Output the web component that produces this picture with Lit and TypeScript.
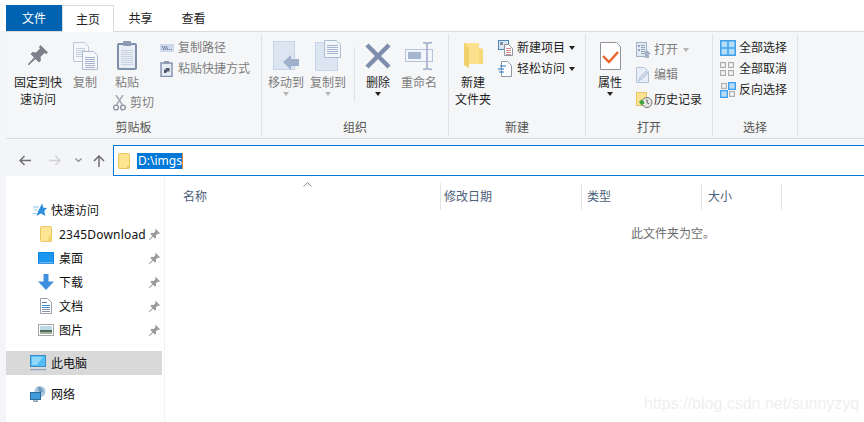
import { LitElement, html, css, svg } from "lit";
import { customElement } from "lit/decorators.js";

const pinPath = "M12.5 0 L20 7.5 L18 9 L16.5 8 L12.5 12 L13 15.5 L11 17.5 L7.5 14 L1 20 L0 20 L0 19 L6 12.5 L2.5 9 L4.5 7 L8 7.5 L12 3.5 L11 2Z";
const ic = (w: number, h: number, body: unknown) =>
  html`<svg class="ic" width=${w} height=${h} viewBox="0 0 ${w} ${h}">${body}</svg>`;

const lines = (x: number, y: number, w: number, n: number, step: number, c: string) =>
  Array.from({ length: n }, (_, i) => svg`<rect x=${x} y=${y + i * step} width=${w} height="1" fill=${c}/>`);

const doc = (x: number, y: number, w: number, h: number, fill = "#f4f6fa", stroke = "#bcc8da") =>
  svg`<path d="M${x + .5} ${y + .5}H${x + w - 4.5}L${x + w - .5} ${y + 4.5}V${y + h - .5}H${x + .5}Z" fill=${fill} stroke=${stroke}/>`;

const icons = {
  pin: ic(20, 21, svg`<path d=${pinPath} fill="#7c8087"/>`),
  copy: ic(25, 28, svg`${doc(0, 0, 16, 20)}${lines(3, 6, 9, 5, 2, "#c5cfdf")}${doc(9, 9, 16, 19, "#f6f8fb", "#aebcd2")}${lines(12, 15, 10, 6, 2, "#a6b5cd")}`),
  paste: ic(20, 29, svg`<rect x="1" y="3" width="18" height="25" rx="1" fill="#e9eef6" stroke="#7f8ea9" stroke-width="2"/><rect x="6" y="0" width="8" height="5" rx="1" fill="#8d9ab0"/>${lines(4, 9, 12, 8, 2, "#c7d2e3")}`),
  scissors: ic(13, 16, svg`<path d="M3 0L9.5 10M10 0L3.5 10" stroke="#a6aeba" stroke-width="1.6" fill="none"/><circle cx="3" cy="12.5" r="2.4" fill="none" stroke="#8f97a5" stroke-width="1.4"/><circle cx="10" cy="12.5" r="2.4" fill="none" stroke="#8f97a5" stroke-width="1.4"/>`),
  copyPath: ic(14, 8, svg`<rect width="14" height="8" fill="#cdd8ea"/><path d="M2 2L4 6M4 2L6 6M6 2L8 6" stroke="#6f7f99" fill="none"/><rect x="9" y="5" width="1" height="1" fill="#6f7f99"/><rect x="11" y="5" width="1" height="1" fill="#6f7f99"/>`),
  pasteLink: ic(13, 16, svg`<rect x="1" y="2" width="11" height="13.5" fill="#e6ebf4" stroke="#7f8ea9" stroke-width="1.4"/><rect x="4" y="0" width="5" height="3" fill="#8d9ab0"/><path d="M4 12V8.5H6.5L5.5 7H9.5V11L8 10L6 12Z" fill="#4a5568"/>`),
  move: ic(27, 30, svg`<rect x="0.5" y="0.5" width="21" height="28" fill="#dce6f3" stroke="#c8d5e8"/><path d="M10 21L18 14V18H26V25H18V29Z" fill="#9fb1cd"/>`),
  copyTo: ic(27, 31, svg`<rect x="0.5" y="2.5" width="22" height="28" fill="#dce6f3" stroke="#c8d5e8"/>${doc(9, 0, 17, 18, "#f2f5fa", "#aebcd2")}${lines(12, 5, 11, 5, 2, "#a6b5cd")}`),
  del: ic(26, 26, svg`<path d="M2 2L24 24M24 2L2 24" stroke="#7e8dab" stroke-width="4.4" fill="none"/>`),
  rename: ic(28, 28, svg`<rect x="0.5" y="7.5" width="27" height="12" fill="#f2f5f9" stroke="#b5c4dc"/><rect x="3" y="10" width="13" height="7" fill="#a7b6d0"/><path d="M18 0.8H20.5L22 2L23.5 0.8H27M22 2V26M18 27.2H20.5L22 26L23.5 27.2H27" stroke="#9fadc7" stroke-width="1.6" fill="none"/>`),
  folderBig: ic(19, 27, svg`<path d="M0 1H15V6L19 7V22H5Z" fill="#fde08c"/><path d="M0 1L5 6V26L0 23Z" fill="#f0cf6c"/><path d="M15 6L19 7V22H15Z" fill="#f7d878"/>`),
  newItem: ic(15, 16, svg`<rect x="0.5" y="0.5" width="10" height="9" fill="#dce6f3" stroke="#4d86b8"/><rect x="2" y="2" width="3" height="3" fill="#7f93ae"/>${doc(6, 4, 9, 12, "#fff", "#8d97a6")}${lines(8, 8, 5, 4, 2, "#d08a8a")}`),
  easy: ic(14, 16, svg`${doc(3, 0, 11, 16, "#fff", "#8d97a6")}<path d="M2 5H8M0 8H6M1 11H6" stroke="#1e78c8" fill="none"/>`),
  props: ic(21, 28, svg`${doc(0, 0, 21, 28, "#fff", "#8f949b")}<path d="M3 14L9 20L18 10" stroke="#e8622c" stroke-width="2.4" fill="none"/>`),
  open: ic(15, 16, svg`<rect x="0.5" y="0.5" width="10" height="14" fill="#e3e9f3" stroke="#a4b2c8"/>${lines(5, 3, 4, 5, 2, "#93a3bb")}<rect x="2" y="3" width="2" height="2" fill="#93a3bb"/><rect x="2" y="7" width="2" height="2" fill="#93a3bb"/><path d="M11 8L15 12H13V16H9V12H7Z" fill="#a4b2c8"/>`),
  edit: ic(13, 16, svg`${doc(0, 0, 13, 16, "#e8eef8", "#b4c2d8")}<path d="M2.5 14L4 10.5L10 4L12 6L5.5 12.5Z" fill="#cdd8e8" stroke="#a9b8ce" stroke-width=".7"/>`),
  history: ic(17, 16, svg`<rect x="0.5" y="0.5" width="10" height="13" fill="#fbe391" stroke="#e5c565"/><circle cx="11" cy="10.5" r="5" fill="#e4e4e4" stroke="#777"/><path d="M11 7.5V10.5L13 12" stroke="#555" fill="none"/><path d="M3 10L6 7V9H8V12H6V14Z" fill="#3da33a"/>`),
  selAll: ic(16, 16, svg`<rect x="0.75" y="0.75" width="14.5" height="14.5" fill="#b6dcfb" stroke="#3d9fe8" stroke-width="1.5"/><path d="M8 0V16M0 8H16" stroke="#3d9fe8" stroke-width="1.5"/>`),
  selNone: ic(14, 14, svg`<g fill="none" stroke="#aeaeae" stroke-width="1.2"><rect x="0.6" y="0.6" width="4.8" height="4.8"/><rect x="8.6" y="0.6" width="4.8" height="4.8"/><rect x="0.6" y="8.6" width="4.8" height="4.8"/><rect x="8.6" y="8.6" width="4.8" height="4.8"/></g>`),
  invert: ic(16, 16, svg`<g fill="none" stroke="#aeaeae" stroke-width="1.2"><rect x="1.6" y="1.6" width="4.8" height="4.8"/><rect x="9.6" y="9.6" width="4.8" height="4.8"/></g><g fill="#b6dcfb" stroke="#3d9fe8" stroke-width="1.3"><rect x="8.65" y="0.65" width="6.7" height="6.7"/><rect x="0.65" y="8.65" width="6.7" height="6.7"/></g>`),
  back: ic(12, 11, svg`<path d="M5.5 1L1 5.5L5.5 10M1 5.5H12" stroke="#6f6f6f" stroke-width="1.5" fill="none"/>`),
  forward: ic(12, 11, svg`<path d="M6.5 1L11 5.5L6.5 10M0 5.5H11" stroke="#d2d2d2" stroke-width="1.5" fill="none"/>`),
  chevron: ic(7, 5, svg`<path d="M0.5 0.5L3.5 3.5L6.5 0.5" stroke="#8a8a8a" stroke-width="1.2" fill="none"/>`),
  up: ic(12, 12, svg`<path d="M1 6L6 1L11 6M6 1V12" stroke="#6f6f6f" stroke-width="1.5" fill="none"/>`),
  addrFolder: ic(12, 16, svg`<rect x="0.5" y="0.5" width="11" height="15" rx="1" fill="#fde48f" stroke="#eac55e"/><rect x="9" y="13" width="2.5" height="2.5" fill="#eac55e"/>`),
  star: ic(14, 14, svg`<path d="M9 0.5L10.5 4.8L14 5L11.3 8L12.4 13L8 10.5L3.5 13L5 8.5L7 4.5Z" fill="#2f8fdc"/><path d="M0 4H6M1 7H4.5M0 10.5H3.5" stroke="#8cc4ee" fill="none"/>`),
  sFolder: ic(12, 16, svg`<rect x="0.5" y="0.5" width="11" height="15" rx="1" fill="#fde594" stroke="#e9c75f"/><rect x="9" y="10" width="2.5" height="5" fill="#f6d978" stroke="#e9c75f" stroke-width=".6"/>`),
  desktop: ic(16, 12, svg`<rect x="0" y="0" width="16" height="12" fill="#0d82de"/><rect x="1" y="1" width="14" height="9" fill="#1b97f0"/><rect x="1" y="10.5" width="14" height="0.7" fill="#d4eafa"/>`),
  download: ic(16, 16, svg`<path d="M5.5 0H10.5V7.5H16L8 16L0 7.5H5.5Z" fill="#3e8ede"/>`),
  sDoc: ic(12, 16, svg`${doc(0, 0, 12, 16, "#fff", "#9aa2ae")}${lines(2, 4, 5, 1, 2, "#6a7f9a")}${lines(2, 7, 8, 2, 2, "#3d8ed0")}${lines(2, 11, 8, 2, 2, "#8a95a3")}`),
  pic: ic(16, 12, svg`<rect x="0.5" y="0.5" width="15" height="11" fill="#fff" stroke="#a5a5a5"/><rect x="2" y="2" width="12" height="4" fill="#bcd9e8"/><rect x="2" y="6" width="12" height="2" fill="#4f6b57"/><rect x="2" y="8" width="12" height="2" fill="#9fb1a2"/>`),
  pc: ic(16, 16, svg`<rect x="0.5" y="0.5" width="15" height="11" fill="#52bdf7" stroke="#3b8fc4"/><path d="M2 2H13L7 10H2Z" fill="#8fd8fb"/><rect x="0" y="14" width="16" height="1.2" fill="#8ea7c0"/>`),
  net: ic(16, 16, svg`<circle cx="10" cy="5.5" r="5.5" fill="#a9c7de"/><path d="M8 1C11 1 13 3 13 6C11 7 8 6 8 1Z" fill="#6f98b8"/><rect x="0.5" y="6.5" width="10" height="7" fill="#3f9ad9" stroke="#2a6d9d"/><rect x="3" y="14.5" width="5" height="1.2" fill="#5a7d96"/>`),
};

const smallPin = html`<svg class="spin" width="11" height="11" viewBox="0 0 20 20"><path d=${pinPath} fill="#9b9b9b"/></svg>`;

@customElement("app-root")
export class AppRoot extends LitElement {
  static styles = css`
    :host { display: block; width: 864px; height: 422px; overflow: hidden; background: #fff; position: relative;
      font: 12px/17px "Noto Sans", "Noto Sans CJK SC", sans-serif; color: #1f1f1f; }
    * { box-sizing: border-box; }
    .ic, .spin { display: block; flex: none; }
    .tabs { display: flex; height: 31px; padding: 5px 0 0 6px; }
    .tab { width: 53px; height: 26px; display: flex; align-items: center; justify-content: center; color: #222; }
    .tab.file { width: 56px; background: #0063b1; color: #fff; }
    .tab.home { width: 52px; height: 27px; background: #fff; border: 1px solid #dadbdc; border-bottom: 0; position: relative; z-index: 1; }
    .body { background: #f4f5f8; padding-left: 6px; height: 391px; }
    .ribbon { display: flex; height: 108px; background: #f5f6f7; border-top: 1px solid #dadbdc; border-bottom: 1px solid #dadbdc; padding: 2px 0; }
    .group { display: flex; flex-direction: column; justify-content: space-between; align-items: stretch; height: 102px; padding: 3px 0 0; border-right: 1px solid #dfe1e4; }
    .tools { display: flex; align-items: flex-start; }
    .glabel { text-align: center; color: #555; height: 17px; }
    .big { display: flex; flex-direction: column; align-items: center; text-align: center; flex: none; }
    .w36 { width: 36px; } .w40 { width: 40px; } .w42 { width: 42px; } .w46 { width: 46px; } .w52 { width: 52px; }
    .iconbox { height: 37px; display: flex; align-items: center; justify-content: center; }
    .big .label { white-space: nowrap; }
    .off { color: #7d7d7d; }
    .caret { width: 0; height: 0; border: 3px solid transparent; border-top: 4px solid #222; border-bottom: 0; margin-top: 1px; }
    .caret.off { border-top-color: #b5b5b5; }
    .col { display: flex; flex-direction: column; flex: none; }
    .row { display: flex; align-items: center; height: 21px; white-space: nowrap; }
    .row.tall { height: 25px; }
    .icslot { width: 18px; display: flex; justify-content: flex-start; flex: none; }
    .wide .icslot { width: 19px; }
    .rcaret { width: 0; height: 0; border: 3px solid transparent; border-top: 4px solid #222; border-bottom: 0; margin-left: 4px; }
    .rcaret.off { border-top-color: #b5b5b5; margin-left: 5px; }
    .cut { display: flex; align-items: center; gap: 4px; height: 21px; margin-top: 1px; margin-left: 7px; white-space: nowrap; }
    .vsep { width: 1px; height: 55px; background: #dfe1e4; margin: 10px 0 0 0; flex: none; }
    .g1 { width: 256px; } .g2 { width: 187px; } .g3 { width: 137px; } .g4 { width: 127px; } .g5 { width: 85px; }
    .sp3 { width: 3px; flex: none; } .sp4 { width: 4px; flex: none; } .sp5 { width: 5px; flex: none; }
    .sp6 { width: 6px; flex: none; } .sp7 { width: 7px; flex: none; }
    .c54 { width: 54px; }
    .nav { display: flex; align-items: center; height: 37px; padding: 6px 0 0 0; }
    .nbtn { display: flex; justify-content: center; flex: none; }
    .nb-back { margin-left: 13px; width: 12px; }
    .nb-fwd { margin-left: 18px; width: 12px; }
    .nb-chev { margin-left: 14px; width: 7px; }
    .nb-up { margin-left: 11px; width: 12px; }
    .addr { flex: 1; height: 31px; border: 1px solid #0078d7; border-right: 0; margin-left: 8px; display: flex; align-items: center; padding-left: 4px; background: #fff; }
    .sel { margin-left: 7px; background: #0078d7; color: #fff; height: 16px; line-height: 16px; width: 46px; padding-left: 1px; border-right: 1px solid #e8822c; white-space: nowrap; overflow: hidden; }
    .main { display: flex; height: 246px; }
    .side { width: 159px; background: #fff; border-right: 1px solid #f2f2f2; padding-top: 22px; flex: none; }
    .item { display: flex; align-items: center; height: 24px; width: 156px; white-space: nowrap; color: #111; }
    .item.top { padding-left: 26px; }
    .item.sub { padding-left: 32px; }
    .item .slot { width: 16px; display: flex; justify-content: center; flex: none; }
    .item.top .lbl { margin-left: 3px; }
    .item.sub .lbl { margin-left: 5px; }
    .item .spin { margin-left: auto; margin-right: 2px; }
    .item.sub .lbl.long { letter-spacing: .2px; }
    .item.pc { margin-top: 9px; background: #d9d9d9; padding-left: 24px; }
    .item.net { margin-top: 7px; padding-left: 24px; }
    .item.pc .slot, .item.net .slot { width: 18px; justify-content: flex-start; }
    .content { flex: 1; background: #fff; position: relative; }
    .head { display: flex; height: 27px; margin-top: 7px; color: #4c607a; }
    .hc { border-right: 1px solid #e5e5e5; display: flex; align-items: center; padding-left: 4px; flex: none; }
    .hc.name { width: 276px; padding-left: 18px; }
    .hc.date { width: 141px; padding-left: 3px; }
    .hc.type { width: 120px; padding-left: 5px; }
    .hc.size { width: 80px; padding-left: 6px; }
    .sort { position: absolute; left: 138px; top: 6px; }
    .empty { padding: 15px 0 0 466px; color: #6d6d6d; }
    .mark { position: absolute; left: 644px; top: 394px; font: 16px/20px "Liberation Sans", sans-serif; color: #efefef; white-space: nowrap; }
  `;

  private big(icon: unknown, label: unknown, cls: string, off = false, caret = "") {
    return html`<div class="big ${cls} ${off ? "off" : ""}">
      <div class="iconbox">${icon}</div>
      <div class="label">${label}</div>
      ${caret === "on" ? html`<div class="caret"></div>` : caret === "off" ? html`<div class="caret off"></div>` : ""}
    </div>`;
  }

  private small(icon: unknown, label: string, cls = "", after: unknown = "") {
    return html`<div class="row ${cls}"><div class="icslot">${icon}</div><span>${label}</span>${after}</div>`;
  }

  render() {
    return html`
      <div class="tabs">
        <div class="tab file">文件</div>
        <div class="tab home">主页</div>
        <div class="tab">共享</div>
        <div class="tab">查看</div>
      </div>
      <div class="body">
        <div class="ribbon">
          <section class="group g1">
            <div class="tools">
              <div class="sp6"></div>
              ${this.big(icons.pin, html`固定到快<br />速访问`, "w52")}
              ${this.big(icons.copy, "复制", "w42", true)}
              <div class="col c54">
                ${this.big(icons.paste, "粘贴", "w42", true)}
                <div class="cut off">${icons.scissors}<span>剪切</span></div>
              </div>
              <div class="col off">
                ${this.small(icons.copyPath, "复制路径")}
                ${this.small(icons.pasteLink, "粘贴快捷方式")}
              </div>
            </div>
            <div class="glabel">剪贴板</div>
          </section>
          <section class="group g2">
            <div class="tools">
              <div class="sp3"></div>
              ${this.big(icons.move, "移动到", "w42", true, "off")}
              ${this.big(icons.copyTo, "复制到", "w42", true, "off")}
              <div class="sp5"></div>
              <div class="vsep"></div>
              ${this.big(icons.del, html`删除`, "w46", false, "on")}
              ${this.big(icons.rename, "重命名", "w36", true)}
            </div>
            <div class="glabel">组织</div>
          </section>
          <section class="group g3">
            <div class="tools">
              <div class="sp4"></div>
              ${this.big(icons.folderBig, html`新建<br />文件夹`, "w40")}
              <div class="sp5"></div>
              <div class="col">
                ${this.small(icons.newItem, "新建项目", "wide", html`<div class="rcaret"></div>`)}
                ${this.small(icons.easy, "轻松访问", "wide", html`<div class="rcaret"></div>`)}
              </div>
            </div>
            <div class="glabel">新建</div>
          </section>
          <section class="group g4">
            <div class="tools">
              <div class="sp4"></div>
              ${this.big(icons.props, "属性", "w40", false, "on")}
              <div class="sp6"></div>
              <div class="col">
                ${this.small(icons.open, "打开", "tall off", html`<div class="rcaret off"></div>`)}
                ${this.small(icons.edit, "编辑", "tall off")}
                ${this.small(icons.history, "历史记录", "tall")}
              </div>
            </div>
            <div class="glabel">打开</div>
          </section>
          <section class="group g5">
            <div class="tools">
              <div class="sp7"></div>
              <div class="col">
                ${this.small(icons.selAll, "全部选择", "wide")}
                ${this.small(icons.selNone, "全部取消", "wide")}
                ${this.small(icons.invert, "反向选择", "wide")}
              </div>
            </div>
            <div class="glabel">选择</div>
          </section>
        </div>
        <div class="nav">
          <div class="nbtn nb-back">${icons.back}</div>
          <div class="nbtn nb-fwd">${icons.forward}</div>
          <div class="nbtn nb-chev">${icons.chevron}</div>
          <div class="nbtn nb-up">${icons.up}</div>
          <div class="addr">${icons.addrFolder}<div class="sel">D:\\imgs</div></div>
        </div>
        <div class="main">
          <nav class="side">
            <div class="item top"><div class="slot">${icons.star}</div><span class="lbl">快速访问</span></div>
            <div class="item sub"><div class="slot">${icons.sFolder}</div><span class="lbl long">2345Download</span>${smallPin}</div>
            <div class="item sub"><div class="slot">${icons.desktop}</div><span class="lbl">桌面</span>${smallPin}</div>
            <div class="item sub"><div class="slot">${icons.download}</div><span class="lbl">下载</span>${smallPin}</div>
            <div class="item sub"><div class="slot">${icons.sDoc}</div><span class="lbl">文档</span>${smallPin}</div>
            <div class="item sub"><div class="slot">${icons.pic}</div><span class="lbl">图片</span>${smallPin}</div>
            <div class="item top pc"><div class="slot">${icons.pc}</div><span class="lbl">此电脑</span></div>
            <div class="item top net"><div class="slot">${icons.net}</div><span class="lbl">网络</span></div>
          </nav>
          <div class="content">
            <svg class="sort" width="9" height="5" viewBox="0 0 9 5"><path d="M0.5 4.5L4.5 0.7L8.5 4.5" stroke="#8f8f8f" fill="none"/></svg>
            <div class="head">
              <div class="hc name">名称</div>
              <div class="hc date">修改日期</div>
              <div class="hc type">类型</div>
              <div class="hc size">大小</div>
            </div>
            <div class="empty">此文件夹为空。</div>
          </div>
        </div>
      </div>
      <div class="mark">https://blog.csdn.net/sunnyzyq</div>
    `;
  }
}
